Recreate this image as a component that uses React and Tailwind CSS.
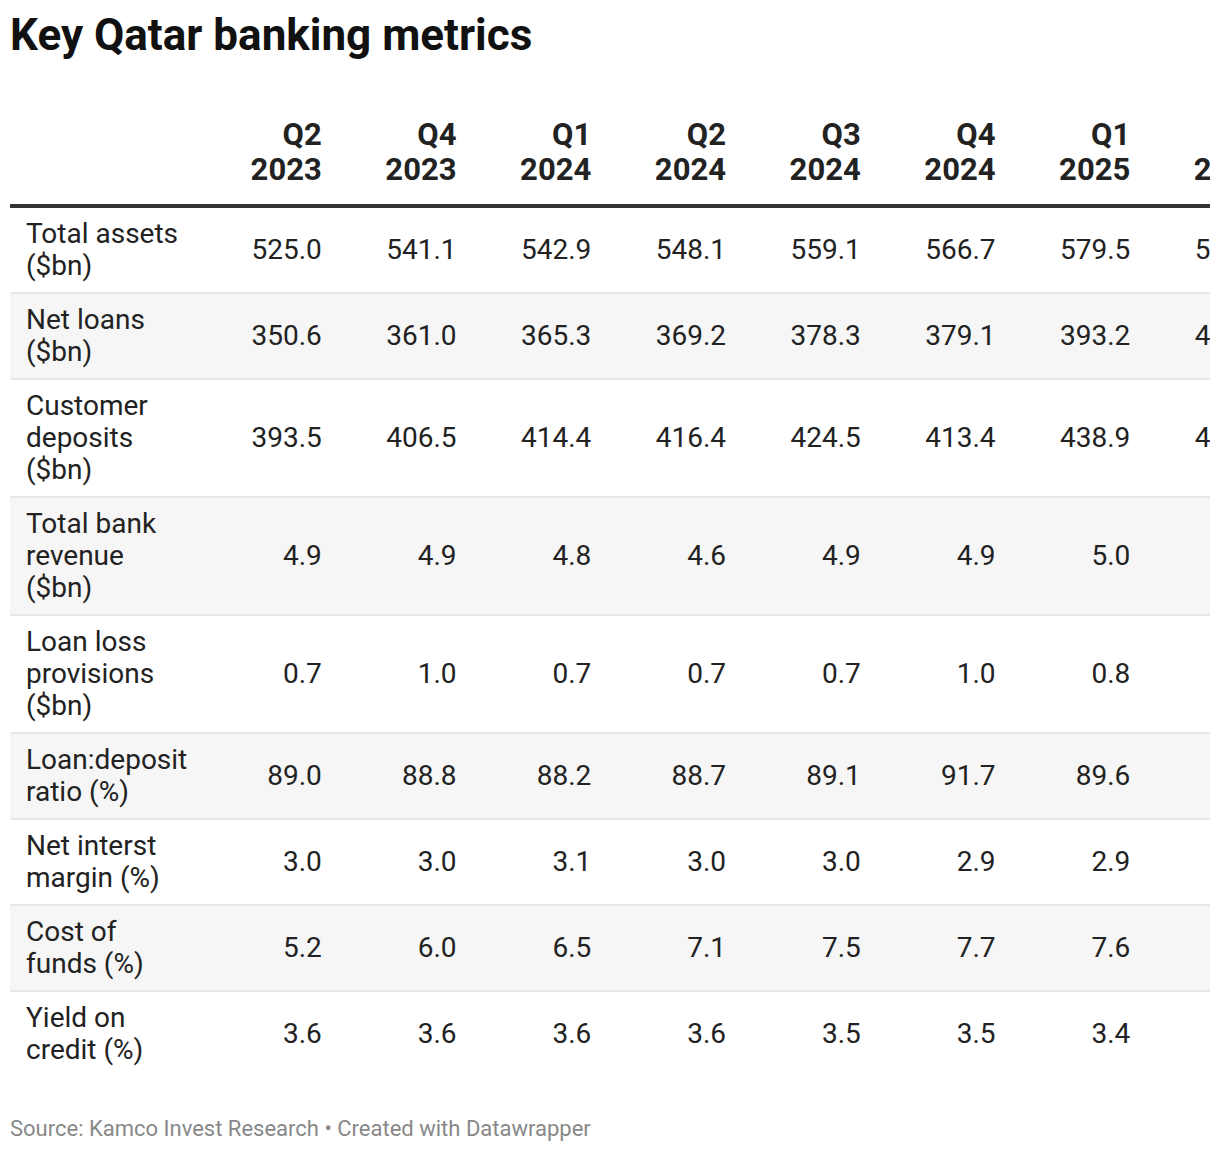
import React from 'react';

const periods = [
    ['Q2', '2023'],
    ['Q4', '2023'],
    ['Q1', '2024'],
    ['Q2', '2024'],
    ['Q3', '2024'],
    ['Q4', '2024'],
    ['Q1', '2025'],
    ['Q2', '2025'],
];

const rows = [
    { label: ['Total assets', '($bn)'], values: ['525.0', '541.1', '542.9', '548.1', '559.1', '566.7', '579.5', '586.2'] },
    { label: ['Net loans', '($bn)'], values: ['350.6', '361.0', '365.3', '369.2', '378.3', '379.1', '393.2', '401.4'] },
    { label: ['Customer', 'deposits', '($bn)'], values: ['393.5', '406.5', '414.4', '416.4', '424.5', '413.4', '438.9', '442.7'] },
    { label: ['Total bank', 'revenue', '($bn)'], values: ['4.9', '4.9', '4.8', '4.6', '4.9', '4.9', '5.0', '5.1'] },
    { label: ['Loan loss', 'provisions', '($bn)'], values: ['0.7', '1.0', '0.7', '0.7', '0.7', '1.0', '0.8', '0.8'] },
    { label: ['Loan:deposit', 'ratio (%)'], values: ['89.0', '88.8', '88.2', '88.7', '89.1', '91.7', '89.6', '90.7'] },
    { label: ['Net interst', 'margin (%)'], values: ['3.0', '3.0', '3.1', '3.0', '3.0', '2.9', '2.9', '2.9'] },
    { label: ['Cost of', 'funds (%)'], values: ['5.2', '6.0', '6.5', '7.1', '7.5', '7.7', '7.6', '7.4'] },
    { label: ['Yield on', 'credit (%)'], values: ['3.6', '3.6', '3.6', '3.6', '3.5', '3.5', '3.4', '3.4'] },
];

const App = () => {
    return (
        <div className="w-[1220px] min-h-[1152px] bg-white font-['Roboto','Liberation_Sans',sans-serif] text-[#222]">
            {/* Title */}
            <h1 className="pl-[10px] pt-[10px] text-[44px] leading-[50px] font-bold text-[#111]">
                Key Qatar banking metrics
            </h1>

            {/* Table */}
            <div className="ml-[10px] w-[1200px] overflow-hidden mt-[57px]">
                <table className="table-fixed border-collapse w-[1265px]">
                    <colgroup>
                        <col className="w-[187px]" />
                        {periods.map((p, i) => (
                            <col key={i} className="w-[134.75px]" />
                        ))}
                    </colgroup>
                    <thead>
                        <tr className="border-b-4 border-[#333]">
                            <th className="pb-[17px]"></th>
                            {periods.map(([q, y], i) => (
                                <th key={i} className="pr-[10px] pb-[17px] text-right align-bottom text-[31px] leading-[35px] font-bold text-[#222]">
                                    <div>{q}</div>
                                    <div>{y}</div>
                                </th>
                            ))}
                        </tr>
                    </thead>
                    <tbody>
                        {rows.map((row, ri) => (
                            <tr
                                key={ri}
                                className={`${ri % 2 === 1 ? 'bg-[#f6f6f6]' : 'bg-white'} ${ri < rows.length - 1 ? 'border-b-2 border-[#e6e6e6]' : ''}`}
                            >
                                <td className="pl-[16px] pr-[10px] py-[10px] text-[28px] leading-[32px] align-middle">
                                    {row.label.map((l, li) => (
                                        <div key={li} className="whitespace-nowrap">{l}</div>
                                    ))}
                                </td>
                                {row.values.map((v, vi) => (
                                    <td key={vi} className="pr-[10px] py-[10px] text-right text-[28px] leading-[32px] align-middle whitespace-nowrap">
                                        {v}
                                    </td>
                                ))}
                            </tr>
                        ))}
                    </tbody>
                </table>
            </div>

            {/* Footer */}
            <p className="pl-[10px] mt-[40px] text-[22px] leading-[26px] text-[#888]">
                Source: Kamco Invest Research • Created with Datawrapper
            </p>
        </div>
    );
};

export default App;
